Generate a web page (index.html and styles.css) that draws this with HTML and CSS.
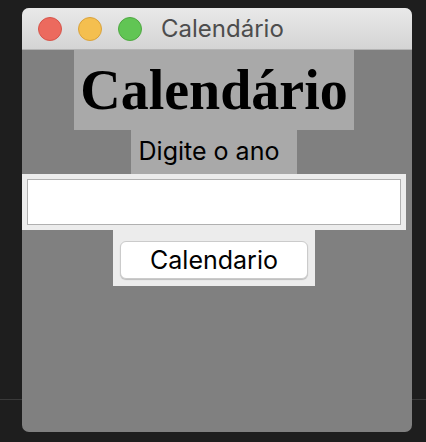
FILE: index.html
```html
<!DOCTYPE html>
<html lang="pt-BR">
<head>
    <meta charset="UTF-8">
    <title>Calendário</title>
    <link rel="stylesheet" href="styles.css">
</head>
<body>

    <div class="janela">
        <div class="barra-titulo">
            <span class="botao fechar"></span>
            <span class="botao minimizar"></span>
            <span class="botao maximizar"></span>
            <span class="titulo">Calendário</span>
        </div>
        <div class="conteudo">
            <div class="rotulo-titulo">Calendário</div>
            <div class="rotulo-ano">Digite o ano</div>
            <div class="moldura-entrada">
                <input type="text" class="entrada-ano">
            </div>
            <div class="moldura-botao">
                <button class="botao-calendario">Calendario</button>
            </div>
        </div>
    </div>

</body>
</html>
```

FILE: styles.css
```css
/* Estilos gerais */
body {
    margin: 0;
    height: 442px;
    overflow: hidden;
    background:
        linear-gradient(#3a3a3a, #3a3a3a) 0 399px / 100% 1px no-repeat,
        #1e1e1e;
    font-family: 'Inter', 'Liberation Sans', sans-serif;
}

/* --- JANELA --- */
.janela {
    margin: 8px 0 0 22px;
    width: 390px; height: 424px;
    border-radius: 7px; overflow: hidden;
    display: flex; flex-direction: column;
    background-color: #808080;
}
.barra-titulo {
    height: 41px; flex-shrink: 0;
    display: flex; align-items: center;
    padding-left: 16px;
    background: linear-gradient(#e9e9e9, #d4d4d4);
    border-bottom: 1px solid #b4b4b4;
}
.botao {
    width: 24px; height: 24px; border-radius: 50%;
    margin-right: 16px; box-sizing: border-box;
}
.fechar { background: #ec6a5e; border: 1px solid #d6554b; }
.minimizar { background: #f4bf4f; border: 1px solid #d9a23c; }
.maximizar { background: #61c554; border: 1px solid #4fa842; }
.titulo {
    margin-left: 3px; font-size: 24px; color: #4d4d4d;
}

/* --- CONTEÚDO (coluna da grade com 384px) --- */
.conteudo {
    width: 384px; flex: 1;
    display: flex; flex-direction: column; align-items: center;
}
.rotulo-titulo {
    width: 280px; height: 80px;
    display: flex; justify-content: center; align-items: center;
    background-color: #a9a9a9;
    font-family: 'Liberation Serif', serif; font-weight: bold;
    font-size: 56px; color: #000;
}
.rotulo-ano {
    width: 166px; height: 44px; box-sizing: border-box;
    padding: 0 10px 2px 0;
    display: flex; justify-content: center; align-items: center;
    background-color: #a9a9a9;
    font-size: 25px; color: #000;
}
.moldura-entrada {
    width: 384px; height: 56px; box-sizing: border-box;
    padding: 5px;
    background-color: #ececec;
}
.entrada-ano {
    width: 100%; height: 46px; box-sizing: border-box;
    margin: 0; border: 1px solid #b0b0b0;
    background: #fff; outline: none;
}
.moldura-botao {
    width: 202px; height: 56px; box-sizing: border-box;
    padding-top: 11px;
    display: flex; justify-content: center; align-items: flex-start;
    background-color: #ececec;
}
.botao-calendario {
    width: 188px; height: 38px; padding: 0;
    background: #fff; border: 1px solid #cbcbcb; border-radius: 6px;
    box-shadow: 0 1px 1px rgba(0, 0, 0, 0.2);
    font-family: 'Inter', 'Liberation Sans', sans-serif;
    font-size: 25px; color: #000;
}
```
